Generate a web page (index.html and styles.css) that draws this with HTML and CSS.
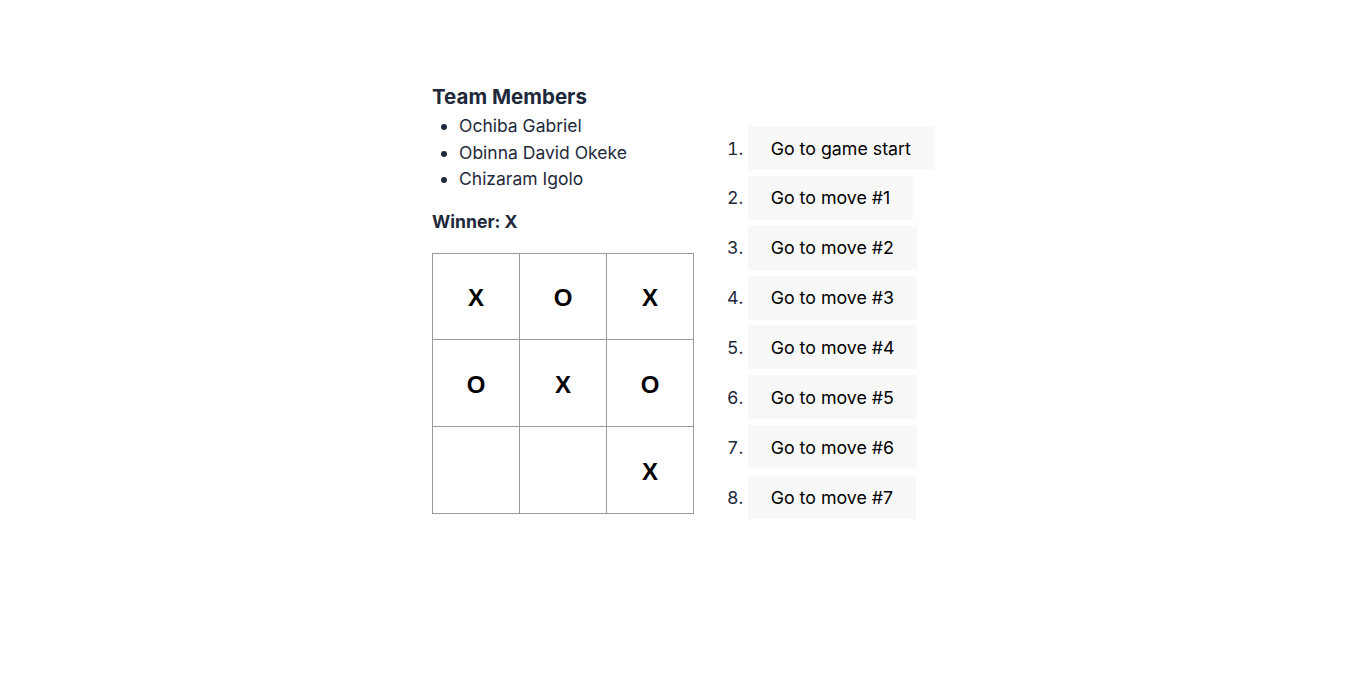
FILE: index.html
```html
<!DOCTYPE html>
<html lang="en">
<head>
<meta charset="utf-8">
<title>Tic Tac Toe</title>
<link rel="stylesheet" href="styles.css">
</head>
<body>
<div class="page">
  <div class="game">
    <div class="game-board">
      <h2 class="team-title">Team Members</h2>
      <ul class="team-list">
        <li>Ochiba Gabriel</li>
        <li>Obinna David Okeke</li>
        <li>Chizaram Igolo</li>
      </ul>
      <div class="status">Winner: X</div>
      <div class="board">
        <div class="board-row">
          <button class="square">X</button>
          <button class="square">O</button>
          <button class="square">X</button>
        </div>
        <div class="board-row">
          <button class="square">O</button>
          <button class="square">X</button>
          <button class="square">O</button>
        </div>
        <div class="board-row">
          <button class="square"></button>
          <button class="square"></button>
          <button class="square">X</button>
        </div>
      </div>
    </div>
    <div class="game-info">
      <ol class="moves">
        <li><button class="move-btn">Go to game start</button></li>
        <li><button class="move-btn">Go to move #1</button></li>
        <li><button class="move-btn">Go to move #2</button></li>
        <li><button class="move-btn">Go to move #3</button></li>
        <li><button class="move-btn">Go to move #4</button></li>
        <li><button class="move-btn">Go to move #5</button></li>
        <li><button class="move-btn">Go to move #6</button></li>
        <li><button class="move-btn">Go to move #7</button></li>
      </ol>
    </div>
  </div>
</div>
</body>
</html>
```

FILE: styles.css
```css
html, body {
  margin: 0;
  padding: 0;
  background: #ffffff;
}

body {
  font-family: Inter, "Noto Sans", sans-serif;
  color: #1e293b;
}

.page {
  display: flex;
  justify-content: center;
  padding-top: 82px;
}

.game {
  display: flex;
  flex-direction: row;
  width: 502px;
}

.game-board {
  display: flex;
  flex-direction: column;
  flex-shrink: 0;
}

.team-title {
  margin: 0;
  font-size: 20.5px;
  line-height: 30px;
  font-weight: 700;
  color: #1e293b;
}

.team-list {
  margin: 1px 0 0 0;
  padding-left: 27px;
  font-size: 17.5px;
  line-height: 26.5px;
}

.status {
  margin-top: 16px;
  font-size: 17.6px;
  line-height: 26px;
  font-weight: 700;
  color: #1e293b;
}

.board {
  margin-top: 18px;
  display: flex;
  flex-direction: column;
}

.board-row {
  display: flex;
}

.square {
  width: 88px;
  height: 87.7px;
  margin: 0 -1px -1px 0;
  padding: 4px 0 0 0;
  border: 1px solid #999999;
  background: #ffffff;
  font-family: "Liberation Sans", Arial, sans-serif;
  font-weight: 700;
  font-size: 24px;
  line-height: 34px;
  color: #000000;
  text-align: center;
}

.game-info {
  margin-left: 15px;
  margin-top: 44px;
  flex-shrink: 0;
}

.moves {
  margin: 0;
  padding-left: 40px;
  font-size: 17.8px;
  color: #1e293b;
}

.moves li {
  margin-bottom: 5.86px;
}

.move-btn {
  font-family: Inter, "Noto Sans", sans-serif;
  font-size: 17.8px;
  line-height: 22px;
  padding: 11.5px 22.7px 10.5px;
  border: none;
  background: #f8f8f8;
  color: #000000;
  white-space: nowrap;
}
```
